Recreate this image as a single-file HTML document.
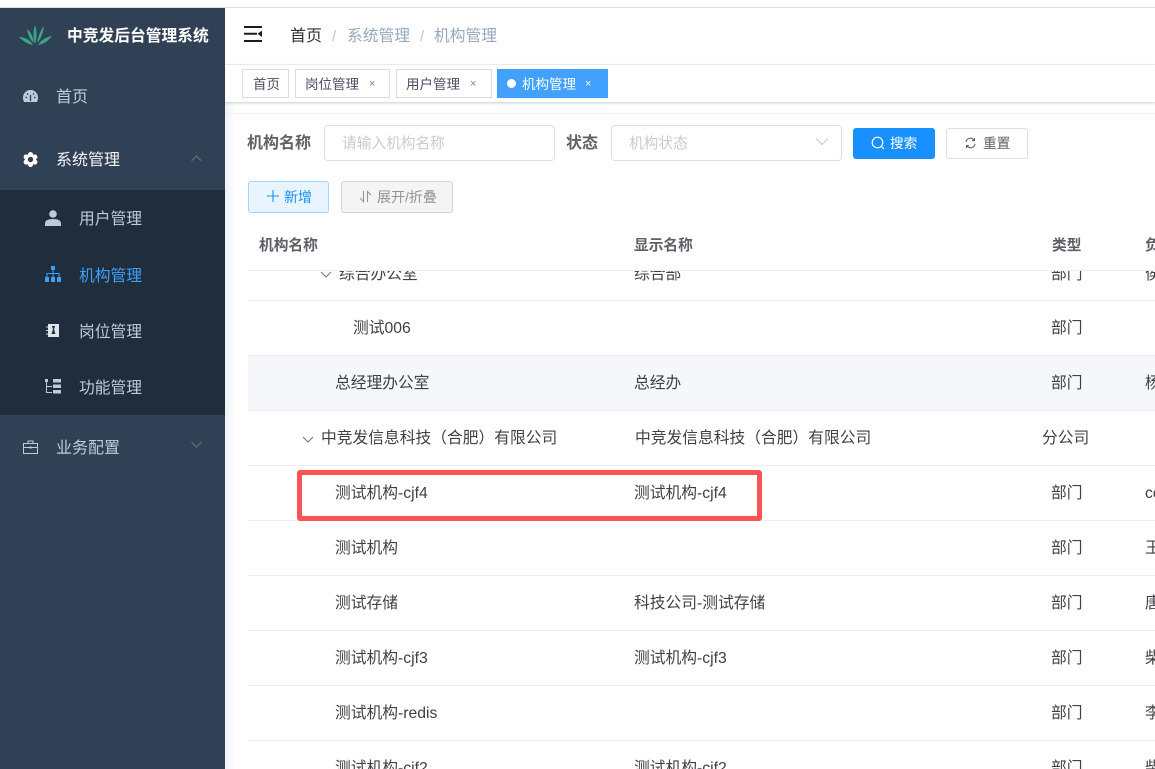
<!DOCTYPE html>
<html lang="zh"><head><meta charset="utf-8"><title>机构管理</title>
<style>
*{box-sizing:border-box}
html,body{margin:0;padding:0;width:1155px;height:769px;overflow:hidden;background:#fff}
body{font-family:"Liberation Sans","Noto Sans CJK SC",sans-serif;color:#303133;position:relative}
.a{position:absolute;white-space:nowrap}
.m{font-size:16px;line-height:24px;color:#bfcbd9}
.s{font-size:15.75px;line-height:22px;color:#bfcbd9}
.t{font-size:15.75px;line-height:22px;color:#3f4145}
.l{position:absolute;left:248px;width:907px;height:1px;background:#ebeef5}
.tag{position:absolute;top:69px;height:29px;border:1px solid #d8dce5;font-size:13.5px;line-height:29px;color:#495060;background:#fff;white-space:nowrap}
.x{position:absolute;font-size:11px;line-height:28px;color:#7f8694}
.h{font-size:14.7px;line-height:20px;font-weight:700;color:#5c5f66}
</style></head><body>
<div class="a" style="left:0;top:7px;width:1155px;height:1px;background:#ddd"></div>
<div class="a" style="left:0;top:8px;width:225px;height:761px;background:#304156"></div>
<div class="a" style="left:0;top:190px;width:225px;height:225px;background:#1f2d3d"></div>
<div class="a" style="left:225px;top:8px;width:10px;height:761px;background:linear-gradient(90deg,#f0f1f3,#fff)"></div>

<svg class="a" style="left:18px;top:23px" width="35" height="24" viewBox="0 0 35 24"><g fill="#3aa587"><path d="M1 14C7 14 12 17 15 22C9 21 5 18 1 14Z"/><path d="M34 13C28 14 23 17 20 22C26 21 30 18 34 13Z"/><path d="M9 6C13 9 15 14 16 20C12 17 10 12 9 6Z"/><path d="M26 3C22 8 20 14 19 20C23 16 25 10 26 3Z"/><path d="M17 2C15 8 15 15 17 21C19 15 19 8 17 2Z"/></g></svg>
<div class="a" style="left:67px;top:26px;font-size:15.75px;line-height:22px;font-weight:700;color:#fff">中竞发后台管理系统</div>

<svg class="a" style="left:23px;top:90px" width="15" height="12" viewBox="0 0 15 12"><path fill="#bfcbd9" d="M7.500 0A7.500 7.500 0 0 0 0 7.500C0 9 .4 10.500 1 12H14C14.600 10.500 15 9 15 7.500A7.500 7.500 0 0 0 7.500 0Z"/><path stroke="#304156" stroke-width="1.400" d="M7.500 11V5M2.500 7.500h1.500M11 7.500h1.500M4 3.500l1 1M11 3.500l-1 1"/></svg>
<div class="a m" style="left:56px;top:86px">首页</div>
<svg class="a" style="left:23px;top:152px" width="15" height="15" viewBox="0 0 15 15"><g fill="#fff"><circle cx="7.500" cy="7.500" r="5.500"/><circle cx="7.500" cy="2.600" r="2.600"/><circle cx="7.500" cy="12.400" r="2.600"/><circle cx="3.200" cy="5" r="2.600"/><circle cx="11.800" cy="5" r="2.600"/><circle cx="3.200" cy="10" r="2.600"/><circle cx="11.800" cy="10" r="2.600"/></g><circle cx="7.500" cy="7.500" r="2.700" fill="#304156"/></svg>
<div class="a m" style="left:56px;top:149px;color:#f4f4f5">系统管理</div>
<svg class="a" style="left:190px;top:154px" width="13" height="9" viewBox="0 0 13 9"><path d="M1.500 7L6.500 2l5 5" fill="none" stroke="#657283" stroke-width="1.100"/></svg>

<svg class="a" style="left:45px;top:210px" width="16" height="16" viewBox="0 0 16 16"><circle cx="8" cy="4" r="3.800" fill="#bfcbd9"/><path fill="#bfcbd9" d="M0 16v-2.500C0 10.500 3 9 8 9s8 1.500 8 4.500V16Z"/></svg>
<div class="a s" style="left:79px;top:209px">用户管理</div>
<svg class="a" style="left:45px;top:266px" width="16" height="16" viewBox="0 0 16 16"><path fill="#409eff" d="M6 0h4v4H6ZM0 11h4v5H0ZM6 11h4v5H6ZM12 11h4v5h-4Z"/><path fill="none" stroke="#409eff" d="M8 4v7M2 11V7.500h12V11"/></svg>
<div class="a s" style="left:79px;top:266px;color:#409eff">机构管理</div>
<svg class="a" style="left:46px;top:323px" width="14" height="15" viewBox="0 0 14 15"><path fill="#dfe4ea" d="M2 1h11v13H2Z"/><path fill="#1f2d3d" d="M6 3h3v1.500h-.8V7L9.500 11H5.500L6.800 7V4.500H6Z"/><path stroke="#bfcbd9" d="M0 4h2M0 7.500h2M0 11h2"/></svg>
<div class="a s" style="left:79px;top:322px">岗位管理</div>
<svg class="a" style="left:45px;top:379px" width="16" height="15" viewBox="0 0 16 15"><path fill="#bfcbd9" d="M0 0h3v3H0ZM8 0h8v3.500H8ZM8 5.500h8V9H8ZM8 11h8v3.500H8Z"/><path fill="none" stroke="#bfcbd9" d="M1.500 3v10.500H7M1.500 7.500H7"/></svg>
<div class="a s" style="left:79px;top:378px">功能管理</div>

<svg class="a" style="left:23px;top:440px" width="15" height="14" viewBox="0 0 15 14"><path fill="none" stroke="#bfcbd9" d="M.500 3.500h14v10H.500ZM5 3.500V1h5v2.500M.500 7.500h14"/><path stroke="#bfcbd9" stroke-width="2" d="M7.500 6.500v2"/></svg>
<div class="a m" style="left:56px;top:437px">业务配置</div>
<svg class="a" style="left:190px;top:440px" width="13" height="9" viewBox="0 0 13 9"><path d="M1.500 2l5 5 5-5" fill="none" stroke="#657283" stroke-width="1.100"/></svg>

<div class="a" style="left:225px;top:8px;width:930px;height:56px;background:#fff"></div>
<div class="a" style="left:225px;top:64px;width:930px;height:1px;background:#f3f3f3"></div>
<svg class="a" style="left:244px;top:26px" width="19" height="17" viewBox="0 0 19 17"><path fill="#1c1c1c" d="M0 0h18v2H0ZM0 6.800h13v2H0ZM0 14h18v2H0ZM13.500 7.800l4.500-3.200v6.400Z"/></svg>
<div class="a" style="left:290px;top:25px;font-size:16px;line-height:24px;color:#303133">首页</div>
<div class="a" style="left:332px;top:25px;font-size:15px;line-height:24px;color:#c0c4cc">/</div>
<div class="a" style="left:347px;top:25px;font-size:15.75px;line-height:24px;color:#97a8be">系统管理</div>
<div class="a" style="left:420px;top:25px;font-size:15px;line-height:24px;color:#c0c4cc">/</div>
<div class="a" style="left:434px;top:25px;font-size:15.75px;line-height:24px;color:#97a8be">机构管理</div>

<div class="a" style="left:225px;top:65px;width:930px;height:37px;background:#fff;box-shadow:0 1px 3px rgba(0,21,41,.22)"></div>
<div class="a" style="left:225px;top:113px;width:930px;height:1px;background:#eef0f3"></div>
<div class="tag" style="left:242px;width:47px;padding-left:10px">首页</div>
<div class="tag" style="left:295px;width:95px;padding-left:9px">岗位管理<span class="x" style="left:73px;top:0">×</span></div>
<div class="tag" style="left:396px;width:96px;padding-left:9px">用户管理<span class="x" style="left:73px;top:0">×</span></div>
<div class="tag" style="left:497px;width:111px;background:#42a0ff;border-color:#42a0ff;color:#fff;padding-left:24px"><span style="position:absolute;left:9px;top:9px;width:9px;height:9px;border-radius:50%;background:#fff"></span>机构管理<span class="x" style="left:87px;top:0;color:#fff">×</span></div>

<div class="a" style="left:247px;top:133px;font-size:16px;line-height:22px;font-weight:700;color:#5f6266">机构名称</div>
<div class="a" style="left:324px;top:125px;width:231px;height:36px;border:1px solid #dcdfe6;border-radius:4px;font-size:14.7px;line-height:36px;color:#c8cbd1;padding-left:17px">请输入机构名称</div>
<div class="a" style="left:566px;top:133px;font-size:16px;line-height:22px;font-weight:700;color:#5f6266">状态</div>
<div class="a" style="left:611px;top:125px;width:231px;height:36px;border:1px solid #dcdfe6;border-radius:4px;font-size:14.7px;line-height:36px;color:#c8cbd1;padding-left:17px">机构状态</div>
<svg class="a" style="left:815px;top:137px" width="14" height="10" viewBox="0 0 14 10"><path d="M1 1.500l6 6 6-6" fill="none" stroke="#c4c7ce" stroke-width="1.100"/></svg>
<div class="a" style="left:853px;top:128px;width:82px;height:31px;background:#1890ff;border-radius:3px;color:#fff;font-size:13.65px;line-height:31px;padding-left:37px">搜索</div>
<svg class="a" style="left:871px;top:136px" width="14" height="14" viewBox="0 0 14 14"><circle cx="6.500" cy="6.500" r="5.300" fill="none" stroke="#fff" stroke-width="1.200"/><path d="M10.500 10.500l2.500 2.500" stroke="#fff" stroke-width="1.200"/></svg>
<div class="a" style="left:946px;top:128px;width:82px;height:31px;background:#fff;border:1px solid #dcdfe6;border-radius:3px;color:#606266;font-size:13.65px;line-height:29px;padding-left:36px">重置</div>
<svg class="a" style="left:965px;top:137px" width="11" height="12" viewBox="0 0 11 12"><path d="M1 5A4.500 4.500 0 0 1 9 3M10 7A4.500 4.500 0 0 1 2 9" fill="none" stroke="#606266" stroke-width="1.100"/><path d="M9.500 1v2.500H7M1.500 11V8.500H4" fill="none" stroke="#606266"/></svg>

<div class="a" style="left:248px;top:181px;width:81px;height:32px;background:#e8f4ff;border:1px solid #a3d3ff;border-radius:3px;color:#1890ff;font-size:14px;line-height:30px;padding-left:35px">新增</div>
<svg class="a" style="left:267px;top:190px" width="12" height="12" viewBox="0 0 12 12"><path d="M6 0v12M0 6h12" stroke="#1890ff" stroke-width="1.100"/></svg>
<div class="a" style="left:341px;top:181px;width:112px;height:32px;background:#f4f4f5;border:1px solid #d3d4d6;border-radius:3px;color:#909399;font-size:14px;line-height:30px;padding-left:35px">展开/折叠</div>
<svg class="a" style="left:359px;top:190px" width="13" height="13" viewBox="0 0 13 13"><path d="M4.500 1v10.500L1 8M8.500 12V1.500L12 5" fill="none" stroke="#909399" stroke-width="1.100"/></svg>

<!-- table body rows -->
<div class="a" style="left:248px;top:271px;width:907px;height:498px;overflow:hidden">
  <div class="a" style="left:0;top:85px;width:907px;height:54px;background:#f5f7fa"></div>
  <div class="a t" style="left:91px;top:-7px">综合办公室</div>
  <div class="a t" style="left:386px;top:-7px">综合部</div>
  <div class="a t" style="left:803px;top:-7px">部门</div>
  <div class="a t" style="left:897px;top:-7px">侯</div>
  <svg class="a" style="left:72px;top:0" width="12" height="8" viewBox="0 0 12 8"><path d="M1 1l5 5 5-5" fill="none" stroke="#70747a"/></svg>
  <div class="a t" style="left:105px;top:47px">测试006</div><div class="a t" style="left:803px;top:47px">部门</div>
  <div class="a t" style="left:87px;top:102px">总经理办公室</div><div class="a t" style="left:386px;top:102px">总经办</div><div class="a t" style="left:803px;top:102px">部门</div><div class="a t" style="left:897px;top:102px">杨</div>
  <svg class="a" style="left:54px;top:165px" width="12" height="8" viewBox="0 0 12 8"><path d="M1 1l5 5 5-5" fill="none" stroke="#70747a"/></svg>
  <div class="a t" style="left:73px;top:157px">中竞发信息科技（合肥）有限公司</div><div class="a t" style="left:387px;top:157px">中竞发信息科技（合肥）有限公司</div><div class="a t" style="left:794px;top:157px">分公司</div>
  <div class="a t" style="left:87px;top:212px">测试机构-cjf4</div><div class="a t" style="left:386px;top:212px">测试机构-cjf4</div><div class="a t" style="left:803px;top:212px">部门</div><div class="a t" style="left:897px;top:212px">co</div>
  <div class="a t" style="left:87px;top:267px">测试机构</div><div class="a t" style="left:803px;top:267px">部门</div><div class="a t" style="left:897px;top:267px">王</div>
  <div class="a t" style="left:87px;top:322px">测试存储</div><div class="a t" style="left:386px;top:322px">科技公司-测试存储</div><div class="a t" style="left:803px;top:322px">部门</div><div class="a t" style="left:897px;top:322px">唐</div>
  <div class="a t" style="left:87px;top:377px">测试机构-cjf3</div><div class="a t" style="left:386px;top:377px">测试机构-cjf3</div><div class="a t" style="left:803px;top:377px">部门</div><div class="a t" style="left:897px;top:377px">柴</div>
  <div class="a t" style="left:87px;top:432px">测试机构-redis</div><div class="a t" style="left:803px;top:432px">部门</div><div class="a t" style="left:897px;top:432px">李</div>
  <div class="a t" style="left:87px;top:487px">测试机构-cjf2</div><div class="a t" style="left:386px;top:487px">测试机构-cjf2</div><div class="a t" style="left:803px;top:487px">部门</div><div class="a t" style="left:897px;top:487px">柴</div>
</div>
<div class="a" style="left:248px;top:228px;width:907px;height:42px;background:#fff"></div>
<div class="a h" style="left:259px;top:236px">机构名称</div>
<div class="a h" style="left:634px;top:236px">显示名称</div>
<div class="a h" style="left:1052px;top:236px">类型</div>
<div class="a h" style="left:1145px;top:236px">负责人</div>
<div class="l" style="top:270px"></div><div class="l" style="top:300px"></div><div class="l" style="top:355px"></div><div class="l" style="top:410px"></div><div class="l" style="top:465px"></div><div class="l" style="top:520px"></div><div class="l" style="top:575px"></div><div class="l" style="top:630px"></div><div class="l" style="top:685px"></div><div class="l" style="top:740px"></div>

<div class="a" style="left:297px;top:470px;width:465px;height:51px;border:5px solid #f95356;border-radius:3px"></div>
</body></html>
